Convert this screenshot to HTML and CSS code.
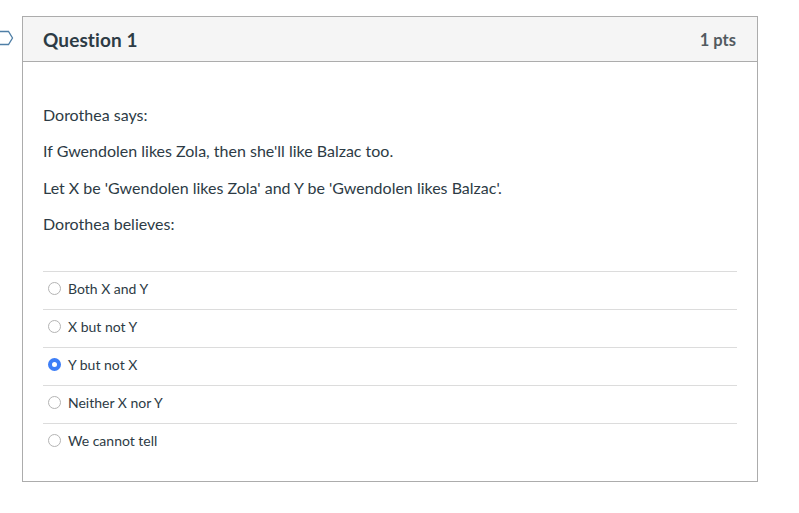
FILE: index.html
```html
<!DOCTYPE html>
<html>
<head>
<meta charset="utf-8">
<link rel="stylesheet" href="styles.css">
</head>
<body>
<div class="page">
  <svg class="flag" width="14" height="16" viewBox="0 0 14 16"><path d="M-2 1.5 H8.5 L12.5 8 L8.5 14.5 H-2" fill="none" stroke="#4f7fa6" stroke-width="1.3"/></svg>
  <div class="card">
    <div class="card-header">
      <h2 class="title">Question 1</h2>
      <span class="pts">1 pts</span>
    </div>
    <div class="card-body">
      <div class="question-text">
        <p>Dorothea says:</p>
        <p>If Gwendolen likes Zola, then she'll like Balzac too.</p>
        <p>Let X be 'Gwendolen likes Zola' and Y be 'Gwendolen likes Balzac'.</p>
        <p>Dorothea believes:</p>
      </div>
      <div class="answers">
        <div class="answer"><span class="radio"></span><span class="label">Both X and Y</span></div>
        <div class="answer"><span class="radio"></span><span class="label">X but not Y</span></div>
        <div class="answer"><span class="radio checked"></span><span class="label">Y but not X</span></div>
        <div class="answer"><span class="radio"></span><span class="label">Neither X nor Y</span></div>
        <div class="answer"><span class="radio"></span><span class="label">We cannot tell</span></div>
      </div>
    </div>
  </div>
</div>
</body>
</html>
```

FILE: styles.css
```css
html, body {
  margin: 0;
  padding: 0;
  background: #ffffff;
}
body {
  font-family: Lato, "Liberation Sans", sans-serif;
  color: #2d3b45;
}
.page {
  position: relative;
  padding: 16px 0 0 22px;
}
.flag {
  position: absolute;
  left: 0;
  top: 30px;
}
.card {
  width: 734px;
  border: 1px solid #acacac;
  background: #fff;
}
.card-header {
  height: 44px;
  background: #f5f5f5;
  border-bottom: 1px solid #acacac;
  display: flex;
  align-items: center;
  justify-content: space-between;
  padding: 0 21px 0 20px;
}
.title {
  margin: 0;
  font-size: 19px;
  font-weight: 700;
  letter-spacing: 0.1px;
  color: #2d3b45;
}
.pts {
  font-size: 16.5px;
  font-weight: 700;
  color: #525a60;
  padding-top: 2px;
}
.card-body {
  padding: 41px 20px 20px 20px;
}
.question-text p {
  margin: 0 0 12.3px 0;
  font-size: 16px;
  line-height: 24px;
}
.answers {
  margin-top: 35px;
}
.answer {
  display: flex;
  align-items: center;
  gap: 7px;
  border-top: 1px solid #dcdcdc;
  padding: 7px 0 10px 5px;
  height: 20px;
}
.label {
  font-size: 14px;
  line-height: 20px;
  color: #2d3b45;
}
.radio {
  box-sizing: border-box;
  width: 13px;
  height: 13px;
  border-radius: 50%;
  border: 1px solid #b4b4b4;
  background: #fff;
  flex: none;
}
.radio.checked {
  border: 4.5px solid #3d7ef7;
  background: #fff;
}
```
